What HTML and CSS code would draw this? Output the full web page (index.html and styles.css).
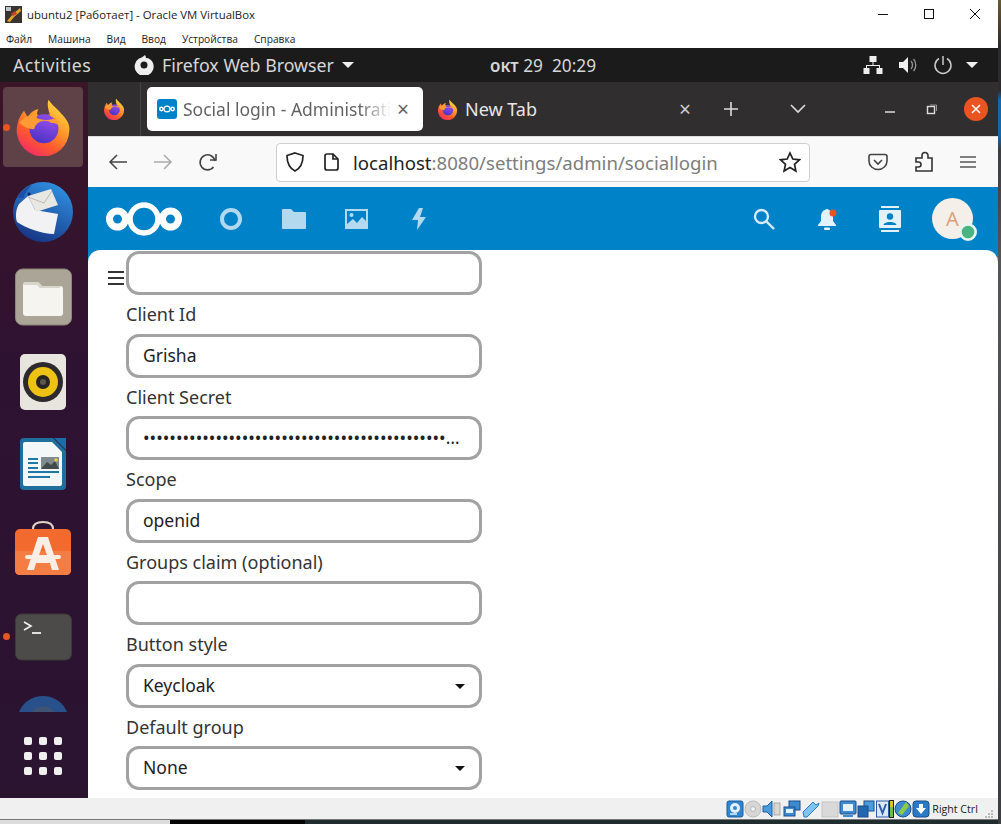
FILE: index.html
```html
<!DOCTYPE html>
<html lang="en">
<head>
    <meta charset="UTF-8">
    <meta name="viewport" content="width=device-width, initial-scale=1.0">
    <title>ubuntu2 - Oracle VM VirtualBox</title>
    <link rel="stylesheet" href="styles.css">
</head>
<body>
<svg class="defs" width="0" height="0">
    <defs>
        <linearGradient id="ffBody" x1="0.85" y1="0" x2="0.25" y2="1">
            <stop offset="0" stop-color="#ffe14a"/>
            <stop offset="0.35" stop-color="#ffa62e"/>
            <stop offset="0.7" stop-color="#ff5a2c"/>
            <stop offset="1" stop-color="#f02a6a"/>
        </linearGradient>
        <linearGradient id="ffGlobe" x1="0.7" y1="0" x2="0.3" y2="1">
            <stop offset="0" stop-color="#8f4be8"/>
            <stop offset="1" stop-color="#4d33c4"/>
        </linearGradient>
        <symbol id="firefox" viewBox="0 0 64 64">
            <path fill="url(#ffBody)" d="M61 36A29 29 0 1 1 4 28C5 23 8 18 11 14L15 21C18 16 22 13 27 12C25 16 25 18 27 20L41 22C38 14 36 8 38 2C43 9 48 12 52 17C58 23 62 29 61 36Z"/>
            <circle cx="33" cy="34" r="16" fill="url(#ffGlobe)"/>
            <path fill="#ff9b35" d="M6 27C12 20 20 17 26 19C23 22 26 23 33 24C39 25 43 23 45 23C40 19 38 19 37 18C44 19 49 24 50 31C46 26 38 27 32 31C26 36 14 36 6 27Z"/>
            <circle cx="34" cy="37" r="12" fill="url(#ffGlobe)"/>
        </symbol>
        <symbol id="ncLogo" viewBox="0 0 76 36">
            <g fill="none" stroke="currentColor">
                <circle cx="11.500" cy="18" r="8" stroke-width="7"/>
                <circle cx="38" cy="18" r="14" stroke-width="5.500"/>
                <circle cx="64.500" cy="18" r="8" stroke-width="7"/>
            </g>
        </symbol>
    </defs>
</svg>

<div class="window">
    <div class="titlebar">
        <svg class="app-icon" width="17" height="17" viewBox="0 0 17 17">
            <rect width="17" height="17" fill="#3a3330"/>
            <rect x="1" y="1" width="5" height="4" fill="#b9c4cc"/>
            <path d="M2 15L8 8L15 2L16 5L9 11L5 16Z" fill="#e0a52c"/>
            <path d="M6 8L10 5L12 8L8 10Z" fill="#c8412c"/>
        </svg>
        <span class="title-text">ubuntu2 [Работает] - Oracle VM VirtualBox</span>
        <div class="win-controls">
            <svg width="46" height="16" viewBox="0 0 46 16"><path d="M18 8.5H28" stroke="#111" stroke-width="1"/></svg>
            <svg width="46" height="16" viewBox="0 0 46 16"><rect x="18.5" y="3.5" width="9" height="9" fill="none" stroke="#111"/></svg>
            <svg width="46" height="16" viewBox="0 0 46 16"><path d="M18 3L28 13M28 3L18 13" stroke="#111" fill="none"/></svg>
        </div>
    </div>
    <div class="menubar">
        <span>Файл</span><span>Машина</span><span>Вид</span><span>Ввод</span><span>Устройства</span><span>Справка</span>
    </div>

    <div class="screen">
        <div class="topbar">
            <span class="activities">Activities</span>
            <div class="app-menu">
                <svg width="20" height="20" viewBox="0 0 20 20">
                    <path fill="#eee" d="M11 0C9 2 7 3 5 3.500A9.500 9.500 0 1 0 19 8C18 5 15 3 12 3C12 2 11.500 1 11 0ZM10 6.500A3.500 3.500 0 1 1 10 13.500A3.500 3.500 0 0 1 10 6.500Z"/>
                </svg>
                <span>Firefox Web Browser</span>
                <i class="caret"></i>
            </div>
            <span class="clock"><span class="month">окт</span> 29&nbsp; 20:29</span>
            <div class="tray">
                <svg width="20" height="20" viewBox="0 0 20 20" fill="#eee">
                    <rect x="6.500" y="1" width="7" height="6"/>
                    <path d="M9.500 7H10.500V10H17V13H16V11H4V13H3V10H9.500Z"/>
                    <rect x="0.500" y="13" width="6" height="6"/><rect x="13.500" y="13" width="6" height="6"/>
                </svg>
                <svg width="20" height="20" viewBox="0 0 20 20">
                    <path fill="#eee" d="M1 7H5L10 2V18L5 13H1Z"/>
                    <path fill="none" stroke="#999" stroke-width="1.300" d="M13 6C15 8 15 12 13 14M15.500 4C18.500 7 18.500 13 15.500 16"/>
                </svg>
                <svg width="20" height="20" viewBox="0 0 20 20" fill="none" stroke="#c9c9c9" stroke-width="1.500">
                    <path d="M6 3.500A8 8 0 1 0 14 3.500"/><path d="M10 1V10"/>
                </svg>
                <i class="caret"></i>
            </div>
        </div>

        <div class="desktop">
            <nav class="dock">
                <div class="dock-item dock-active">
                    <i class="run-dot"></i>
                    <svg width="58" height="58"><use href="#firefox"/></svg>
                </div>
                <div class="dock-item dock-tb">
                    <svg width="88" height="84" viewBox="0 3 88 84">
                        <defs>
                            <linearGradient id="tbBlue" x1="0.7" y1="0" x2="0.2" y2="1">
                                <stop offset="0" stop-color="#2f8fe0"/>
                                <stop offset="1" stop-color="#16307e"/>
                            </linearGradient>
                        </defs>
                        <circle cx="43" cy="44" r="30" fill="url(#tbBlue)"/>
                        <path d="M17 30C19 26 24 20 32 17C27 22 24 26 24 30Z" fill="#1c4fa8"/>
                        <path d="M19 36L28 28L35 42L58 46L54 66C42 66 26 60 17 54C15 48 16 41 19 36Z" fill="#f2f2f4"/>
                        <path d="M28 28L51 21L58 37L36 44Z" fill="#e9e7e2"/>
                        <path d="M28 29L44 35L52 23" fill="none" stroke="#b9b9b9"/>
                        <circle cx="29" cy="26" r="1.500" fill="#10255e"/>
                    </svg>
                </div>
                <div class="dock-item">
                    <svg width="88" height="84" viewBox="0 0 88 84">
                        <rect x="15.500" y="6" width="56" height="56" rx="7" fill="#aaa596" stroke="#8b8677"/>
                        <path d="M23 22Q23 19 26 19H38L42 23H60Q63 23 63 26V50Q63 53 60 53H26Q23 53 23 50Z" fill="#f5f4f1"/>
                        <path d="M23 22Q23 19 26 19H38L42 23H60V25H40L37 22Z" fill="#d8d5cc"/>
                    </svg>
                </div>
                <div class="dock-item">
                    <svg width="88" height="84" viewBox="0 0 88 84">
                        <rect x="20" y="7" width="46" height="56" rx="5" fill="#e8e5df"/>
                        <circle cx="43" cy="35" r="20" fill="#2c2a2c"/>
                        <circle cx="43" cy="35" r="15" fill="#eec214"/>
                        <circle cx="43" cy="35" r="7" fill="#262422"/>
                        <circle cx="43" cy="35" r="3" fill="#5a5650"/>
                    </svg>
                </div>
                <div class="dock-item">
                    <svg width="88" height="84" viewBox="0 0 88 84">
                        <path d="M24 7H53L66 20V55Q66 59 62 59H24Q20 59 20 55V11Q20 7 24 7Z" fill="#1f6f9e"/>
                        <path d="M25 11H52L62 21V53Q62 55 60 55H25Q23 55 23 53V13Q23 11 25 11Z" fill="#f4f7f8"/>
                        <path d="M54 7L66 7V19Z" fill="#1d6ea8"/>
                        <rect x="41" y="26" width="18" height="12" fill="#7f8b8e"/>
                        <path d="M41 38L47 31L51 34L55 30L59 38Z" fill="#444b4c"/>
                        <circle cx="56" cy="29" r="1.800" fill="#f1c84a"/>
                        <g fill="#1f78a8">
                            <rect x="28" y="27" width="10" height="2"/><rect x="28" y="31" width="10" height="2"/>
                            <rect x="28" y="36" width="10" height="2"/><rect x="28" y="40" width="31" height="2"/>
                            <rect x="28" y="45" width="22" height="2"/>
                        </g>
                    </svg>
                </div>
                <div class="dock-item">
                    <svg width="88" height="84" viewBox="0 -2 88 84">
                        <path d="M33 15V12Q33 5 43 5Q53 5 53 12V15" fill="none" stroke="#e0d4c6" stroke-width="2"/>
                        <rect x="15" y="12" width="56" height="46" rx="5" fill="#f26a2e"/>
                        <path d="M15 34H71V53Q71 58 66 58H20Q15 58 15 53Z" fill="#f47d44"/>
                        <path d="M38 20H48L59 53H52L50 46H36L34 53H27ZM43 27L38 41H48Z" fill="#f8eee6"/>
                        <rect x="25" y="38" width="36" height="4" rx="2" fill="#f8eee6"/>
                    </svg>
                </div>
                <div class="dock-item">
                    <i class="run-dot run-dot-low"></i>
                    <svg width="88" height="84" viewBox="0 -2 88 84">
                        <rect x="15.500" y="13" width="56" height="46" rx="6" fill="#4c4b49" stroke="#3a3937"/>
                        <path d="M24 21L31 25L24 29" fill="none" stroke="#f2f2f2" stroke-width="1.600"/>
                        <path d="M32 32H41" stroke="#f2f2f2" stroke-width="1.800"/>
                    </svg>
                </div>
                <div class="dock-item dock-cut">
                    <svg width="88" height="18" viewBox="0 0 88 18">
                        <path d="M19 18A26 26 0 0 1 67 18Z" fill="#28508a"/>
                        <path d="M32 18A12 9 0 0 1 54 18Z" fill="#3f5474"/>
                    </svg>
                </div>
                <div class="dock-apps">
                    <i></i><i></i><i></i><i></i><i></i><i></i><i></i><i></i><i></i>
                </div>
            </nav>

            <div class="browser">
                <div class="tabbar">
                    <div class="tab-side">
                        <svg width="22" height="22"><use href="#firefox"/></svg>
                    </div>
                    <div class="tab tab-active">
                        <span class="favicon">
                            <svg width="16" height="8" class="nc-mark"><use href="#ncLogo"/></svg>
                        </span>
                        <span class="tab-title">Social login - Administrati</span>
                        <span class="tab-close">×</span>
                    </div>
                    <div class="tab tab-new">
                        <svg width="21" height="21"><use href="#firefox"/></svg>
                        <span class="tab-title">New Tab</span>
                        <span class="tab-close">×</span>
                    </div>
                    <svg class="tab-plus" width="18" height="18" viewBox="0 0 18 18"><path d="M9 2V16M2 9H16" stroke="#ddd" stroke-width="1.600"/></svg>
                    <svg class="tab-list" width="18" height="12" viewBox="0 0 18 12"><path d="M2 2L9 9L16 2" fill="none" stroke="#ddd" stroke-width="1.600"/></svg>
                    <div class="tab-winbtns">
                        <svg width="12" height="12" viewBox="0 0 12 12"><path d="M1 9H11" stroke="#ddd" stroke-width="1.500"/></svg>
                        <svg width="12" height="12" viewBox="0 0 12 12"><rect x="1.500" y="3.500" width="7" height="7" fill="none" stroke="#ddd" stroke-width="1.400"/><path d="M4 2H10.500V8" fill="none" stroke="#999"/></svg>
                        <span class="close-round">
                            <svg width="12" height="12" viewBox="0 0 12 12"><path d="M2 2L10 10M10 2L2 10" stroke="#fff" stroke-width="1.600"/></svg>
                        </span>
                    </div>
                </div>

                <div class="toolbar">
                    <svg class="nav-btn" width="20" height="20" viewBox="0 0 20 20" fill="none" stroke="#444" stroke-width="1.500"><path d="M19 10H2M9 3L2 10L9 17"/></svg>
                    <svg class="nav-btn" width="20" height="20" viewBox="0 0 20 20" fill="none" stroke="#aaa" stroke-width="1.500"><path d="M1 10H18M11 3L18 10L11 17"/></svg>
                    <svg class="nav-btn" width="20" height="20" viewBox="0 0 20 20" fill="none" stroke="#444" stroke-width="1.600"><path d="M17 9A7.500 7.500 0 1 0 15.500 15"/><path d="M18 2V8H12"/></svg>
                    <div class="urlbar">
                        <svg width="20" height="22" viewBox="0 0 20 22" fill="none" stroke="#222" stroke-width="1.700"><path d="M10 2L18 4.500C18 12 16 17 10 20C4 17 2 12 2 4.500Z"/></svg>
                        <svg class="url-page" width="16" height="18" viewBox="0 0 16 18" fill="none" stroke="#222" stroke-width="1.700"><path d="M2 3Q2 1 4 1H10L15 6V15Q15 17 13 17H4Q2 17 2 15Z"/><path d="M10 1V6H15"/></svg>
                        <span class="url-text"><b>localhost</b>:8080/settings/admin/sociallogin</span>
                        <svg class="url-star" width="22" height="22" viewBox="0 0 22 22" fill="none" stroke="#222" stroke-width="1.700"><path d="M11 2L13.800 8L20.500 8.800L15.500 13.300L16.900 20L11 16.600L5.100 20L6.500 13.300L1.500 8.800L8.200 8Z"/></svg>
                    </div>
                    <div class="tool-right">
                        <svg width="20" height="18" viewBox="0 0 20 18" fill="none" stroke="#444" stroke-width="1.600"><path d="M3 1.500H17Q19 1.500 19 3.500V8A9 8.500 0 0 1 1 8V3.500Q1 1.500 3 1.500Z"/><path d="M6 7L10 11L14 7"/></svg>
                        <svg width="20" height="22" viewBox="0 0 20 22" fill="none" stroke="#333" stroke-width="1.600"><path d="M2 7H8V4.500A3 3 0 0 1 14 4.500V7H18V20H2V16H4.500A2.500 2.500 0 0 0 4.500 11H2Z"/></svg>
                        <svg width="18" height="14" viewBox="0 0 18 14" stroke="#555" stroke-width="1.700"><path d="M1 2H17M1 7H17M1 12H17"/></svg>
                    </div>
                </div>

                <header class="nc-header">
                    <svg class="nc-logo" width="76" height="36"><use href="#ncLogo"/></svg>
                    <div class="nc-apps">
                        <span class="nc-slot"><svg width="24" height="24" viewBox="0 0 24 24" fill="none" stroke="#b3d9ef" stroke-width="4"><circle cx="12" cy="12" r="9"/></svg></span>
                        <span class="nc-slot"><svg width="24" height="20" viewBox="0 0 24 20" fill="#b3d9ef"><path d="M0 1Q0 0 1 0H9L12 3H23Q24 3 24 4V19Q24 20 23 20H1Q0 20 0 19Z"/></svg></span>
                        <span class="nc-slot"><svg width="23" height="20" viewBox="0 0 23 20"><rect x="1" y="1" width="21" height="18" fill="none" stroke="#b3d9ef" stroke-width="2"/><circle cx="6.500" cy="6" r="2" fill="#b3d9ef"/><path d="M2 15L8 10L12 14L17 8L21 12V18H2Z" fill="#b3d9ef"/></svg></span>
                        <span class="nc-slot"><svg width="16" height="22" viewBox="0 0 16 22" fill="#b3d9ef"><path d="M7 0L0 12H6L5 22L14 9H8L11 0Z"/></svg></span>
                    </div>
                    <div class="nc-right">
                        <span class="nc-slot"><svg width="22" height="22" viewBox="0 0 22 22" fill="none" stroke="#d8ecf7" stroke-width="2.400"><circle cx="8.500" cy="8.500" r="6.500"/><path d="M13 13L21 21"/></svg></span>
                        <span class="nc-slot">
                            <svg width="22" height="24" viewBox="0 0 22 24"><path fill="#e3f1f9" d="M11 2Q12 2 13 3C16 4 17 7 17 10V14L20 18V19H2V18L5 14V10C5 6 7 3 9 3Q10 2 11 2Z"/><rect x="8" y="20.500" width="6" height="2.500" rx="1" fill="#e3f1f9"/><circle cx="17" cy="6" r="3.500" fill="#e9541f"/></svg>
                        </span>
                        <span class="nc-slot"><svg width="22" height="26" viewBox="0 0 22 26" fill="#e3f1f9"><rect x="2" y="0" width="18" height="2"/><rect x="2" y="24" width="18" height="2"/><rect y="4" width="22" height="18" rx="1"/><circle cx="11" cy="10.500" r="3.200" fill="#0082c9"/><path d="M4.500 19C5 15 17 15 17.500 19Z" fill="#0082c9"/></svg></span>
                        <span class="avatar">A<i class="status-dot"></i></span>
                    </div>
                </header>

                <main class="content">
                    <svg class="nav-toggle" width="16" height="16" viewBox="0 0 16 16" stroke="#333" stroke-width="2"><path d="M0 2H16M0 8H16M0 14H16"/></svg>
                    <form class="provider-form">
                        <input class="field" type="text">
                        <label>Client Id</label>
                        <input class="field" type="text" value="Grisha">
                        <label>Client Secret</label>
                        <input class="field" type="text" value="••••••••••••••••••••••••••••••••••••••••••••••••••••••••••••••••••">
                        <label>Scope</label>
                        <input class="field" type="text" value="openid">
                        <label>Groups claim (optional)</label>
                        <input class="field" type="text">
                        <label>Button style</label>
                        <div class="select-wrap">
                            <select class="field"><option>Keycloak</option></select>
                        </div>
                        <label>Default group</label>
                        <div class="select-wrap">
                            <select class="field"><option>None</option></select>
                        </div>
                    </form>
                </main>
            </div>
        </div>
    </div>

    <div class="statusbar">
        <svg width="18" height="18" viewBox="0 0 18 18"><rect x="1" y="1" width="16" height="16" rx="2" fill="#2e86d0" stroke="#1a5c9c"/><circle cx="9" cy="8" r="5" fill="#e4f0fa"/><circle cx="9" cy="8" r="2" fill="#2e86d0"/><path d="M4 14H11" stroke="#e4f0fa" stroke-width="1.500"/></svg>
        <svg width="18" height="18" viewBox="0 0 18 18"><circle cx="9" cy="9" r="8" fill="#d6d6d6" stroke="#bcbcbc"/><circle cx="9" cy="9" r="2.500" fill="#f2f2f2" stroke="#b5b5b5"/></svg>
        <svg width="20" height="18" viewBox="0 0 20 18"><path d="M1 6H5L10 1V17L5 12H1Z" fill="#4b9cdc" stroke="#1f5f9c"/><rect x="12" y="3" width="6" height="12" fill="#d8d8d0" stroke="#aaa"/></svg>
        <svg width="18" height="18" viewBox="0 0 18 18"><rect x="6" y="1" width="11" height="9" fill="#3d8ad0" stroke="#1a4d8c"/><rect x="1" y="7" width="11" height="9" fill="#3d8ad0" stroke="#1a4d8c"/><rect x="3" y="9" width="7" height="4" fill="#e4f0fa"/></svg>
        <svg width="20" height="18" viewBox="0 0 20 18"><path d="M2 12L12 2L15 5L18 3L17 6L15 8L6 17H3Z" fill="#7fc4ef" stroke="#2a7cc0"/></svg>
        <svg width="18" height="18" viewBox="0 0 18 18"><rect x="1" y="2" width="16" height="15" fill="#d9d9d9" stroke="#c4c4c4"/></svg>
        <svg width="18" height="18" viewBox="0 0 18 18"><rect x="1" y="1" width="16" height="13" rx="1" fill="#3d8ad0" stroke="#1a4d8c"/><rect x="4" y="4" width="10" height="7" fill="#e4f0fa"/><path d="M4 16H14" stroke="#3d8ad0" stroke-width="2"/></svg>
        <svg width="18" height="18" viewBox="0 0 18 18"><rect x="7" y="1" width="10" height="10" fill="#4b9cdc" stroke="#1a4d8c"/><rect x="1" y="6" width="10" height="11" fill="#2168b0" stroke="#1a4d8c"/></svg>
        <svg width="13" height="18" viewBox="0 0 13 18"><rect x="0.500" y="1" width="12" height="16" fill="#dbe8f5" stroke="#2a5ca8"/><path d="M3 4L6.500 13L10 4" fill="none" stroke="#2a5ca8" stroke-width="2"/></svg>
        <svg width="5" height="18" viewBox="0 0 5 18"><rect width="5" height="18" fill="#222"/><rect x="1" y="1" width="3" height="6" fill="#e0c020"/><rect x="1" y="7" width="3" height="10" fill="#6cc040"/></svg>
        <svg width="18" height="18" viewBox="0 0 18 18"><circle cx="9" cy="9" r="8" fill="#3d8ad0" stroke="#1a4d8c"/><path d="M4 13L12 2L15 6L8 15Z" fill="#8ccc44"/></svg>
        <svg width="18" height="18" viewBox="0 0 18 18"><rect x="1" y="1" width="16" height="16" rx="3" fill="#2a78c8" stroke="#1a4d8c"/><path d="M7 4H11V8H14L9 14L4 8H7Z" fill="#fff"/></svg>
        <span class="host-key">Right Ctrl</span>
        <svg class="grip" width="10" height="10" viewBox="0 0 10 10" fill="#bbb"><rect x="7" y="1" width="2" height="2"/><rect x="4" y="4" width="2" height="2"/><rect x="7" y="4" width="2" height="2"/><rect x="1" y="7" width="2" height="2"/><rect x="4" y="7" width="2" height="2"/><rect x="7" y="7" width="2" height="2"/></svg>
    </div>
    <div class="host-strip">
        <i class="strip-light"></i><i class="strip-black"></i><i class="strip-teal"></i>
    </div>
</div>
</body>
</html>
```

FILE: styles.css
```css
html, body {
    margin: 0;
    height: 100%;
    overflow: hidden;
}
body {
    background: linear-gradient(#6a5a30 0, #2b2a2c 48px, #2b2a2c 90px, #1667a8 100px, #1667a8 135px, #3b3d42 150px, #55565a 260px, #3c3d40 100%);
    font-family: "Noto Sans", sans-serif;
}
.defs {
    display: block;
    height: 0;
}
.window {
    width: 998px;
    height: 824px;
    display: flex;
    flex-direction: column;
    background: #fff;
}

/* VirtualBox window */
.titlebar {
    height: 29px;
    flex: none;
    display: flex;
    align-items: center;
    padding-left: 5px;
    font-family: "Open Sans", sans-serif;
    font-size: 11.4px;
    color: #222;
}
.app-icon {
    margin-right: 5px;
}
.win-controls {
    margin-left: auto;
    display: flex;
    transform: translateY(-1px);
}
.menubar {
    height: 19px;
    flex: none;
    display: flex;
    align-items: center;
    padding-left: 6px;
    gap: 16px;
    font-family: "Open Sans", sans-serif;
    font-size: 10.2px;
    color: #222;
}

.screen {
    height: 750px;
    flex: none;
    display: flex;
    flex-direction: column;
}
.topbar {
    height: 34px;
    flex: none;
    background: #1b1b1b;
    color: #d6d6d6;
    font-size: 17.800px;
    display: flex;
    align-items: center;
    position: relative;
    padding-left: 13px;
}
.activities {
    width: 121px;
    letter-spacing: 0.4px;
}
.app-menu {
    display: flex;
    align-items: center;
    gap: 8px;
}
.caret {
    display: inline-block;
    border-left: 6px solid transparent;
    border-right: 6px solid transparent;
    border-top: 6px solid #eee;
}
.clock {
    position: absolute;
    left: 490px;
    font-size: 17.300px;
}
.month {
    font-size: 17px;
    font-weight: 600;
}
.tray {
    margin-left: auto;
    margin-right: 20px;
    display: flex;
    align-items: center;
    gap: 15px;
}
.tray .caret {
    margin-left: -2px;
}

.desktop {
    flex: 1;
    min-height: 0;
    display: flex;
}

/* Ubuntu dock */
.dock {
    width: 88px;
    flex: none;
    background: linear-gradient(#3b1528, #2e1232 40%, #2a1430);
    display: flex;
    flex-direction: column;
    padding-top: 5px;
    overflow: hidden;
}
.dock-item {
    height: 84px;
    flex: none;
    position: relative;
}
.dock-item svg {
    display: block;
}
.dock-tb {
    height: 92px;
}
.dock-active {
    width: 80px;
    height: 80px;
    margin: 0 0 4px 3px;
    background: #5e4248;
    border-radius: 4px;
    display: flex;
    align-items: center;
    justify-content: center;
}
.run-dot {
    position: absolute;
    left: 0;
    top: 37px;
    width: 7px;
    height: 7px;
    border-radius: 50%;
    background: #e95420;
}
.dock-item .run-dot-low {
    left: 3px;
    top: 34px;
}
.dock-cut {
    height: 18px;
    margin-top: 11px;
}
.dock-apps {
    display: grid;
    grid-template-columns: repeat(3, 8px);
    gap: 7px;
    margin: 25px 0 0 24px;
}
.dock-apps i {
    height: 8px;
    border-radius: 2px;
    background: #f0f0f0;
}

/* Firefox */
.browser {
    flex: 1;
    min-width: 0;
    display: flex;
    flex-direction: column;
    background: #0082c9;
}
.tabbar {
    height: 54px;
    flex: none;
    background: #302e2e;
    display: flex;
    align-items: center;
    color: #e6e6e6;
    font-size: 18px;
}
.tab-side {
    width: 53px;
    height: 100%;
    display: flex;
    align-items: center;
    justify-content: center;
    border-right: 1px solid #444;
    box-sizing: border-box;
    margin-right: 6px;
}
.tab {
    display: flex;
    align-items: center;
    height: 44px;
    box-sizing: border-box;
}
.tab-active {
    width: 276px;
    background: #fff;
    border-radius: 5px;
    padding: 0 10px;
}
.tab-active .tab-title {
    width: 208px;
    margin-left: 6px;
    white-space: nowrap;
    overflow: hidden;
    font-size: 17.500px;
    background: linear-gradient(90deg, #5f5f5f 85%, #fff 100%);
    -webkit-background-clip: text;
    background-clip: text;
    color: transparent;
}
.tab-close {
    font-size: 21px;
    line-height: 1;
    margin-left: auto;
    color: #666;
}
.tab-active .tab-close {
    margin-right: 4px;
}
.favicon {
    width: 20px;
    height: 20px;
    border-radius: 3px;
    background: #0082c9;
    color: #fff;
    display: flex;
    align-items: center;
    justify-content: center;
    flex: none;
}
.tab-new {
    width: 270px;
    padding: 0 0 0 14px;
}
.tab-new .tab-title {
    margin-left: 7px;
}
.tab-new .tab-close {
    color: #ccc;
    margin-right: 2px;
}
.tab-plus {
    margin-left: 29px;
}
.tab-list {
    margin-left: 49px;
}
.tab-winbtns {
    margin-left: auto;
    display: flex;
    align-items: center;
    gap: 30px;
    margin-right: 10px;
}
.close-round {
    width: 24px;
    height: 24px;
    margin-left: -4px;
    border-radius: 50%;
    background: #e95420;
    display: flex;
    align-items: center;
    justify-content: center;
}

.toolbar {
    height: 51px;
    flex: none;
    background: #f9f9fa;
    display: flex;
    align-items: center;
    padding-left: 20px;
    box-sizing: border-box;
    border-top: 1px solid #ddd;
}
.nav-btn {
    margin-right: 25px;
}
.urlbar {
    width: 534px;
    height: 39px;
    box-sizing: border-box;
    background: #fff;
    border: 1px solid #cfcfd2;
    border-radius: 4px;
    display: flex;
    align-items: center;
    padding: 0 8px;
    margin-left: 33px;
    font-size: 18.600px;
    color: #7d7d7d;
}
.url-page {
    margin-left: 18px;
}
.url-text {
    margin-left: 14px;
    white-space: nowrap;
}
.url-text b {
    font-weight: 400;
    color: #222;
}
.url-star {
    margin-left: auto;
}
.tool-right {
    margin-left: auto;
    width: 109px;
    margin-right: 21px;
    display: flex;
    align-items: center;
    justify-content: space-between;
}

.nc-header {
    height: 63px;
    flex: none;
    background: #0082c9;
    display: flex;
    align-items: center;
    color: #fff;
}
.nc-logo {
    margin-left: 18px;
    flex: none;
}
.nc-apps {
    display: flex;
    margin-left: 17px;
}
.nc-slot {
    width: 63px;
    display: flex;
    justify-content: center;
    align-items: center;
}
.nc-right {
    margin-left: auto;
    margin-right: 25px;
    display: flex;
    align-items: center;
}
.avatar {
    width: 41px;
    height: 41px;
    margin-left: 11px;
    border-radius: 50%;
    background: #f5efe9;
    color: #d9a27c;
    font-size: 20px;
    display: flex;
    align-items: center;
    justify-content: center;
    position: relative;
}
.status-dot {
    position: absolute;
    right: -5px;
    bottom: -3px;
    width: 14px;
    height: 14px;
    border-radius: 50%;
    background: #49b382;
    border: 3px solid #e8f4f0;
    box-sizing: content-box;
    transform: scale(0.9);
}

.content {
    flex: 1;
    min-height: 0;
    background: #fff;
    position: relative;
    overflow: hidden;
    border-radius: 12px 12px 0 0;
    padding: 1px 0 0 38px;
}
.nav-toggle {
    position: absolute;
    left: 20px;
    top: 20px;
}
.provider-form {
    width: 356px;
    display: flex;
    flex-direction: column;
    font-size: 18px;
    color: #333;
}
.provider-form label {
    height: 38.500px;
    line-height: 38px;
}
.field {
    display: block;
    width: 356px;
    height: 44px;
    box-sizing: border-box;
    border: 3px solid #a2a2a2;
    border-radius: 13px;
    background: #fff;
    padding: 0 14px 2px;
    margin: 0;
    font: inherit;
    font-size: 17.500px;
    color: #222;
    outline: none;
    appearance: none;
    text-overflow: ellipsis;
}
.select-wrap {
    position: relative;
}
.select-wrap::after {
    content: "";
    position: absolute;
    right: 17px;
    top: 20px;
    border-left: 5px solid transparent;
    border-right: 5px solid transparent;
    border-top: 5px solid #111;
}

/* VirtualBox status bar */
.statusbar {
    height: 21px;
    flex: none;
    background: #f0f0f0;
    display: flex;
    align-items: center;
    justify-content: flex-end;
    gap: 0.200px;
    padding-right: 4px;
    font-family: "Open Sans", sans-serif;
    font-size: 10.600px;
    color: #222;
}
.host-key {
    margin: 0 6px 0 2px;
}
.grip {
    align-self: flex-end;
}
.host-strip {
    height: 5px;
    flex: none;
    display: flex;
    background: #1c2a2b;
    border-top: 1px solid #777;
    box-sizing: border-box;
}
.strip-light {
    width: 170px;
    background: #dcdcdc;
}
.strip-black {
    width: 135px;
    background: #050505;
}
.strip-teal {
    flex: 1;
    background: #1f2d2e;
}
```
